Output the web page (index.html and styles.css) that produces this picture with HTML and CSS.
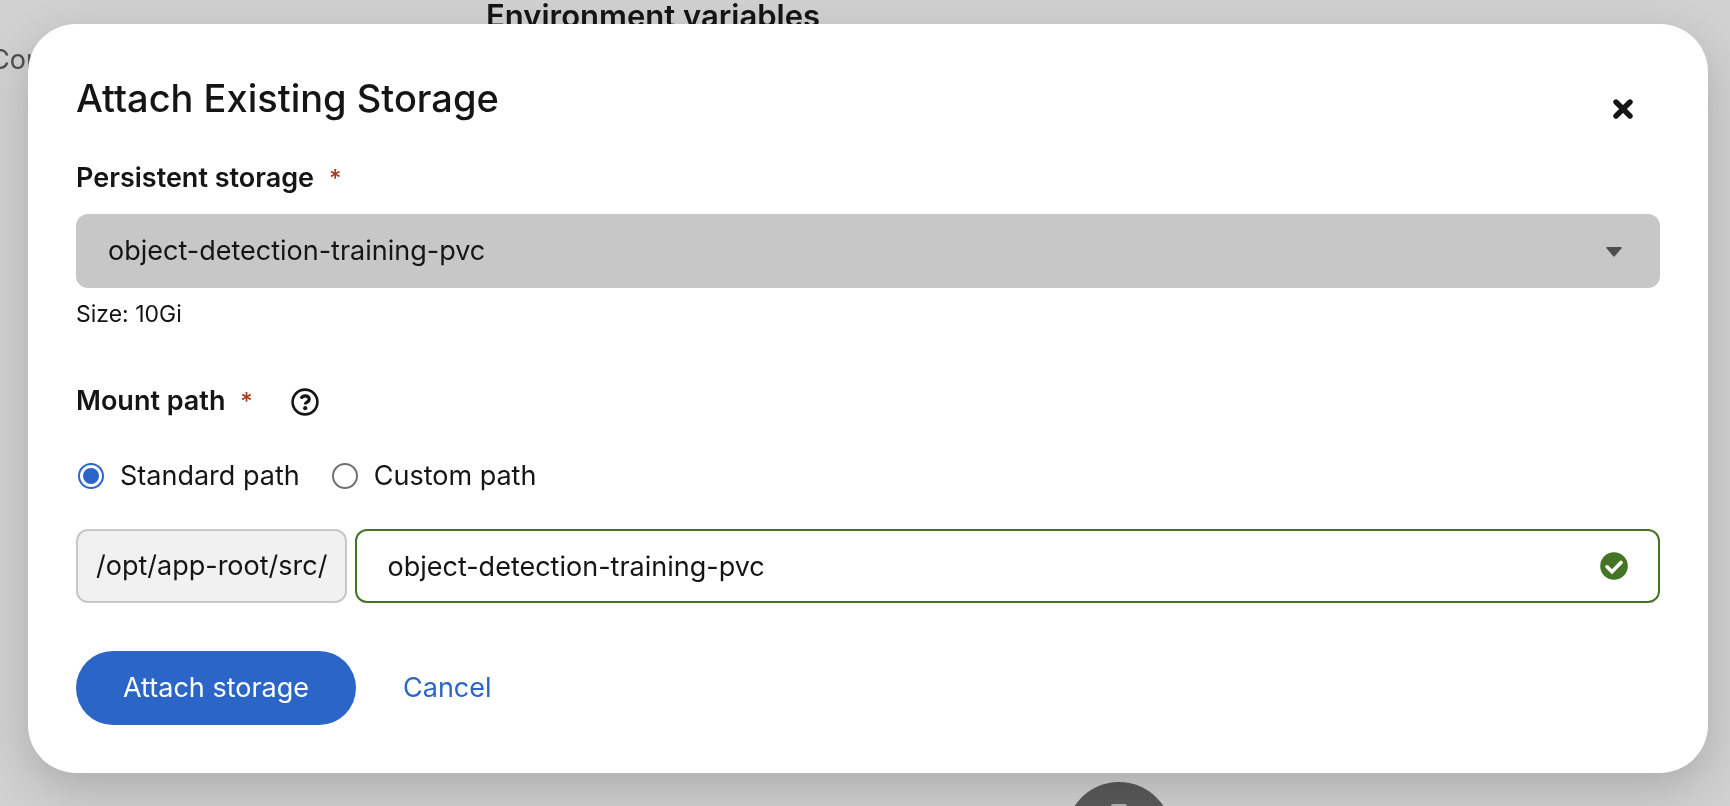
FILE: index.html
```html
<!DOCTYPE html>
<html lang="en">
<head>
<meta charset="utf-8">
<title>Attach Existing Storage</title>
<link rel="stylesheet" href="styles.css">
</head>
<body>
<div class="page" aria-hidden="true">
  <span class="page-nav">Con</span>
  <span class="page-heading">Environment variables</span>
  <svg class="page-badge" viewBox="0 0 106 106"><circle cx="53" cy="53" r="53" fill="#5a5a5a"/><path d="M47 22h12q2 0 2 2v56H45V24q0-2 2-2z" fill="#b4b4b4"/></svg>
</div>
<main class="modal" role="dialog" aria-labelledby="title">
  <header class="modal-header">
    <h1 id="title" class="title">Attach Existing Storage</h1>
    <button class="close" type="button" aria-label="Close"><svg viewBox="0 0 20 20"><path d="M3 3l14 14M17 3L3 17" stroke="#151515" stroke-width="5.400" stroke-linecap="round"/></svg></button>
  </header>
  <form class="form">
    <div class="field">
      <label class="label" for="storage">Persistent storage <span class="required">*</span></label>
      <div class="control">
        <select id="storage" class="select" disabled><option>object-detection-training-pvc</option></select>
        <svg class="caret" viewBox="0 0 16 10"><path d="M1 0h14q1.400 0 .5 1.300L8.800 9.200q-.8.800-1.600 0L.5 1.300Q-.4 0 1 0z" fill="#4d4d4d"/></svg>
      </div>
      <p class="helper">Size: 10Gi</p>
    </div>
    <div class="mount">
      <div class="mount-label">
        <label class="label" for="path">Mount path <span class="required">*</span></label>
        <button class="help" type="button" aria-label="More info"><svg viewBox="0 0 28 28" fill="none" stroke="#151515"><circle cx="14" cy="14" r="12.400" stroke-width="2.600"/><path d="M10 10.600C11 8.600 12.400 7.900 14.200 7.900c2.300 0 4 1.400 4 3.300 0 2.900-3.900 2.900-3.900 5.200" stroke-width="3.200"/><circle cx="14.200" cy="20.200" r="2.100" fill="#151515" stroke="none"/></svg></button>
      </div>
      <div class="radios">
        <label class="radio"><input type="radio" name="kind" checked>Standard path</label>
        <label class="radio"><input type="radio" name="kind">Custom path</label>
      </div>
      <div class="path-group">
        <span class="prefix">/opt/app-root/src/</span>
        <div class="control control-path">
          <input id="path" class="input" type="text" value="object-detection-training-pvc">
          <svg class="valid" viewBox="0 0 28 28"><circle cx="14" cy="14" r="13.800" fill="#467425"/><path d="M7 14.800l5 5L21 10.500" fill="none" stroke="#fff" stroke-width="3.600" stroke-linecap="round"/></svg>
        </div>
      </div>
    </div>
    <footer class="actions">
      <button class="button primary" type="button">Attach storage</button>
      <button class="button link" type="button">Cancel</button>
    </footer>
  </form>
</main>
</body>
</html>
```
FILE: styles.css
```css
* { box-sizing: border-box; }
body {
  margin: 0;
  min-height: 100vh;
  overflow: hidden;
  padding: 24px 22px 34px 28px;
  background: #d1d1d1;
  color: #151515;
  font-family: Inter, "Liberation Sans", sans-serif;
  font-size: 27px;
  line-height: 42px;
}
button, input, select { font: inherit; color: inherit; margin: 0; }
button { border: 0; background: none; padding: 0; }
svg { display: block; }

/* Dimmed page behind the dialog */
.page { position: fixed; inset: 0; overflow: hidden; }
.page-nav { position: absolute; left: -10px; top: 39px; color: #4d4d4d; }
.page-heading { position: absolute; left: 486px; top: -5px; font-size: 31px; font-weight: 600; }
.page-badge { position: absolute; left: 1066px; top: 782px; width: 106px; height: 106px; }

.modal {
  position: relative;
  padding: 48px;
  border-radius: 48px;
  background: #fff;
  box-shadow: 0 16px 48px rgba(0, 0, 0, .18);
}
.modal-header { display: flex; justify-content: space-between; align-items: flex-start; margin-bottom: 33px; }
.title { margin: 0; font-size: 38px; line-height: 52px; font-weight: 500; }
.close { padding: 27px; margin: 0 0 -22px; }
.close svg { width: 20px; height: 20px; }
.form { display: flex; flex-direction: column; gap: 48px; }
.field { display: flex; flex-direction: column; }
.label { font-weight: 600; }
.field .label { margin-bottom: 14px; }
.required { margin-left: 8px; color: #a63d1a; font-size: 24px; font-weight: 500; }
.control { position: relative; }
.select, .input {
  display: block;
  width: 100%;
  height: 74px;
  padding: 0 88px 0 32px;
  border: 0;
  border-radius: 12px;
  appearance: none;
}
.select { background: #c7c7c7; opacity: 1; }
.caret { position: absolute; right: 38px; top: 33px; width: 16px; height: 10px; }
.helper { margin: 8px 0 0; font-size: 23px; line-height: 36px; }
.mount { display: flex; flex-direction: column; gap: 32px; }
.mount-label { display: flex; align-items: center; gap: 38px; }
.help svg { width: 28px; height: 28px; }
.radios { display: flex; gap: 30px; }
.radio { display: flex; align-items: center; gap: 16px; }
.radio input {
  appearance: none;
  width: 26px;
  height: 26px;
  margin: 0 0 0 2px;
  border: 2px solid #707070;
  border-radius: 50%;
  background: #fff;
}
.radio input:checked { border-color: #2b65c7; background: #2b65c7; background-clip: content-box; padding: 3px; }
.path-group { display: flex; gap: 8px; }
.prefix { display: flex; align-items: center; padding: 0 18px; border: 2px solid #c7c7c7; border-radius: 12px; background: #f1f1f1; }
.control-path { flex: 1; }
.input { padding-left: 30px; border: 2px solid #467425; background: #fff; }
.valid { position: absolute; right: 32px; top: 23px; width: 28px; height: 28px; }
.actions { display: flex; }
.button { padding: 16px 47px; border-radius: 37px; }
.primary { background: #2b65c7; color: #fff; }
.link { color: #2b65c7; }
```
